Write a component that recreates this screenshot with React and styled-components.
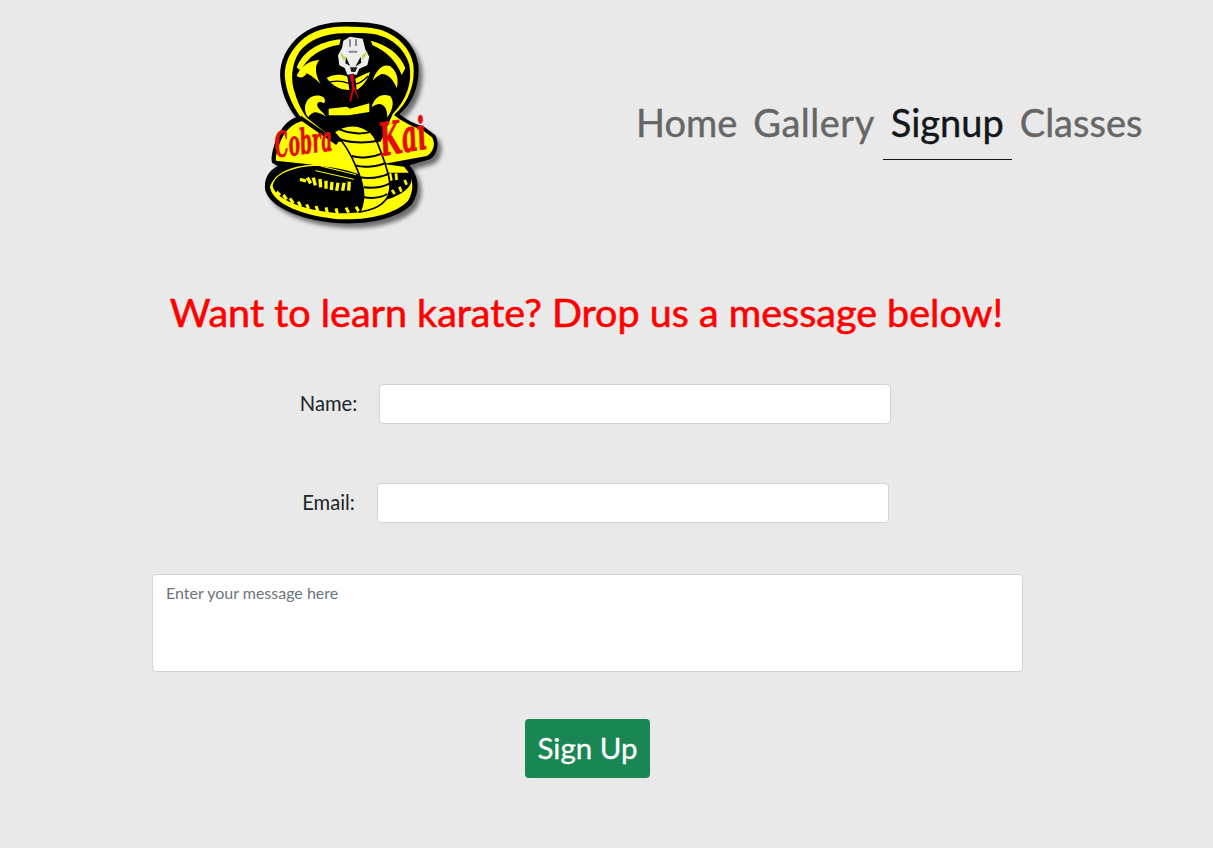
import React from "react";
import styled, { createGlobalStyle } from "styled-components";

const GlobalStyle = createGlobalStyle`
  * {
    box-sizing: border-box;
  }
  body {
    margin: 0;
    background: #e9e9e9;
    font-family: Lato, "Liberation Sans", sans-serif;
    color: #212529;
  }
`;

const Page = styled.div`
  width: 1213px;
  height: 848px;
  overflow: hidden;
`;

const Header = styled.header`
  display: flex;
  align-items: flex-start;
  height: 240px;
  padding: 10px 0 0 250px;
`;

const Nav = styled.nav`
  display: flex;
  margin: 72px 0 0 178px;
`;

const NavLink = styled.a`
  display: block;
  padding: 15px 8px 13px;
  height: 78px;
  font-size: 38px;
  line-height: 50px;
  letter-spacing: ${(props) => props.spacing || "0"};
  -webkit-text-stroke: 0.4px currentColor;
  color: ${(props) => (props.active ? "#14171a" : "#666666")};
  border-bottom: ${(props) => (props.active ? "1px solid #14171a" : "1px solid transparent")};
`;

const Main = styled.main`
  width: 1175px;
  display: flex;
  flex-direction: column;
  align-items: center;
`;

const Title = styled.h1`
  margin: 43px 2px 0 0;
  font-size: 39.5px;
  line-height: 58px;
  font-weight: 400;
  -webkit-text-stroke: 0.6px currentColor;
  color: #ff0000;
`;

const Form = styled.form`
  display: flex;
  flex-direction: column;
  align-items: center;
  margin-top: 43px;
`;

const Row = styled.div`
  display: flex;
  align-items: center;
  gap: 22px;
  margin-bottom: 59px;
  padding-left: 16px;
`;

const Label = styled.label`
  font-size: 20.2px;
  line-height: 26px;
  margin-top: -2px;
`;

const Input = styled.input`
  width: 512px;
  height: 40px;
  background: #fff;
  border: 1px solid #ced4da;
  border-radius: 4px;
`;

const Message = styled.textarea`
  display: block;
  width: 871px;
  height: 98px;
  margin-top: -8px;
  padding: 6px 13px;
  background: #fff;
  border: 1px solid #ced4da;
  border-radius: 4px;
  font-family: Lato, "Liberation Sans", sans-serif;
  font-size: 16px;
  line-height: 24px;
  resize: none;
  &::placeholder {
    color: #6c757d;
    opacity: 1;
  }
`;

const SubmitButton = styled.button`
  width: 125px;
  height: 59px;
  margin-top: 47px;
  padding: 0 0 3px;
  background: #198754;
  border: none;
  border-radius: 4px;
  color: #fff;
  font-family: Lato, "Liberation Sans", sans-serif;
  font-size: 29.5px;
  -webkit-text-stroke: 0.3px currentColor;
`;

const LogoSvg = styled.svg`
  display: block;
  flex: none;
  width: 200px;
  height: 230px;
`;

const LogoWordText = styled.text`
  font-family: "DejaVu Serif", "Liberation Serif", serif;
  font-style: italic;
  font-weight: 700;
  fill: #e30c0c;
  stroke: #e30c0c;
  stroke-width: 2px;
`;

const OUTLINE =
  "M300 36 C240 34 180 45 140 85 C100 125 85 170 92 215 C98 260 118 295 138 322 C110 332 88 360 76 395 C68 420 62 440 66 458 L84 468 C54 482 40 510 46 542 C62 592 150 628 250 638 C340 647 445 628 486 582 C512 545 506 495 478 466 L540 448 C560 438 570 400 556 376 L522 350 C495 343 470 330 448 312 C490 280 510 220 505 165 C498 110 460 70 410 50 C375 38 335 36 300 36 Z";

const HOOD =
  "M298 70 C235 66 180 85 148 125 C122 165 122 215 135 250 C145 285 160 310 172 325 L262 395 L392 395 L428 312 C470 270 488 215 478 165 C465 115 420 80 370 72 C345 68 320 68 298 70 Z";

const Logo = () => (
  <LogoSvg viewBox="0 0 600 690">
    <defs>
      <filter id="logoShadow" x="-10%" y="-10%" width="120%" height="120%">
        <feGaussianBlur stdDeviation="7" />
      </filter>
    </defs>
    <path d={OUTLINE} fill="#6e6e6e" transform="translate(12 14)" filter="url(#logoShadow)" />
    <path d={OUTLINE} fill="#000" />
    {/* yellow rim and wings */}
    <path
      d="M300 50 C245 48 188 58 150 95 C112 132 100 172 106 213 C112 258 135 300 160 332 C125 340 102 365 90 398 C82 420 76 438 78 452 L190 464 C125 466 70 490 60 532 C70 584 160 616 250 626 C340 633 434 616 474 572 C494 540 492 500 462 470 L400 462 L530 438 C550 428 558 402 546 382 L514 358 C490 351 462 338 432 315 C478 275 496 220 490 165 C482 115 445 80 400 62 C370 52 335 50 300 50 Z"
      fill="#ffff00"
    />
    {/* hood */}
    <path d={HOOD} fill="#000" />
    {/* diagonal edge between hood and the left wing */}
    <path d="M150 322 L262 400" stroke="#000" strokeWidth="12" fill="none" />
    {/* hood arcs */}
    <path d="M140 172 C160 125 205 95 272 88 L268 104 C215 112 172 140 152 182 Z" fill="#ffff00" />
    <path d="M466 175 C450 130 410 105 362 92 L368 106 C405 122 438 150 455 195 Z" fill="#ffff00" />
    {/* hood markings */}
    <path d="M140 198 C150 172 175 152 208 150 C192 168 196 195 212 222 C195 205 180 195 170 190 C160 205 150 205 140 198 Z" fill="#ffff00" />
    <path d="M368 212 C378 180 398 160 420 168 C440 182 448 210 440 235 C430 205 410 190 395 192 C385 195 375 205 368 212 Z" fill="#ffff00" />
    <path d="M165 295 C165 270 185 252 212 258 C225 262 228 272 222 280 C208 272 200 278 202 288 C205 298 218 305 228 320 C210 308 190 296 175 322 C168 315 165 305 165 295 Z" fill="#ffff00" />
    <path d="M365 292 C372 262 395 248 420 258 C432 270 432 295 412 322 C412 300 405 285 390 282 C380 282 372 286 365 292 Z" fill="#ffff00" />
    <path d="M236 296 L290 290 L300 296 L358 280 L358 306 L296 316 L236 316 Z" fill="#ffff00" />
    {/* neck bands under the head */}
    <path d="M230 204 C250 192 275 192 292 200 L298 240 C270 240 245 226 230 204 Z" fill="#ffff00" />
    <path d="M232 218 C250 212 275 212 296 220" stroke="#000" strokeWidth="4" fill="none" />
    <path d="M360 186 C345 192 328 200 316 206 L320 240 C342 226 354 206 360 186 Z" fill="#ffff00" />
    <path d="M318 222 C332 218 345 208 354 198" stroke="#000" strokeWidth="4" fill="none" />
    {/* head */}
    <path
      d="M280 92 L300 80 L338 86 L346 118 L358 140 L352 166 L328 176 L320 194 L292 194 L284 174 L268 166 L264 136 L276 114 Z"
      fill="#ededed"
    />
    <path d="M300 88 L300 110 M318 88 L318 108 M296 125 L322 125" stroke="#8a8a8a" strokeWidth="6" fill="none" />
    <path d="M288 140 L300 168 L286 160 Z M332 140 L316 170 L334 158 Z" fill="#111" />
    <path d="M300 172 L322 172 L316 186 L304 186 Z" fill="#222" />
    <path d="M268 126 L286 142 L282 154 Z M354 124 L336 136 L338 150 Z" fill="#c9c93a" />
    {/* tongue */}
    <path
      d="M298 194 L312 192 L312 222 L328 270 L321 262 L312 240 L304 276 L298 272 L306 232 Z"
      fill="#e3000f"
      stroke="#000"
      strokeWidth="1.5"
    />
    {/* coil */}
    <path d="M190 468 C125 472 72 494 68 528 C76 568 160 600 250 608 C290 612 330 608 350 602 L350 500 C300 482 240 466 190 468 Z" fill="#000" />
    <path d="M400 488 L482 488 C494 520 474 550 400 572 Z" fill="#000" />
    <path d="M212 468 L318 494 M196 482 L312 508" stroke="#ffff00" strokeWidth="3" />
    <path
      d="M150 508 L168 513 M172 503 L182 520 M190 503 L196 526 M210 507 L212 532 M228 512 L228 536 M246 516 L244 540 M264 518 L260 542 M282 518 L278 542 M298 515 L296 542"
      stroke="#ffff00"
      strokeWidth="10"
    />
    <path
      d="M80 545 L90 556 M100 555 L110 568 M120 565 L130 580 M145 575 L152 590 M170 583 L176 597 M198 588 L204 604 M228 592 L232 608 M258 595 L262 610 M288 593 L296 608 M318 590 L326 604"
      stroke="#ffff00"
      strokeWidth="9"
    />
    <path
      d="M420 490 L424 512 M438 490 L440 510 M464 510 L470 524 M448 530 L454 545 M426 540 L434 552"
      stroke="#ffff00"
      strokeWidth="8"
    />
    {/* snake body over the coil */}
    <path
      d="M252 366 C300 332 360 345 382 398 C398 440 420 490 420 530 C420 570 390 596 330 606 C350 560 340 520 318 470 C302 430 285 400 252 366 Z"
      fill="#ffff00"
      stroke="#000"
      strokeWidth="5"
    />
    <path
      d="M268 358 C300 372 340 374 366 364 M262 384 C295 400 345 400 385 392 M305 438 C330 446 370 442 398 430 M316 466 C340 474 385 470 408 458 M328 502 C360 506 395 502 418 490 M342 532 C370 536 400 530 420 520 M342 562 C370 566 395 562 412 552"
      stroke="#000"
      strokeWidth="6"
      fill="none"
    />
    {/* wordmark */}
    <LogoWord x="78" y="442" rotate="-7" size="104" squeeze="0.5">Cobra</LogoWord>
    <LogoWord x="396" y="438" rotate="-9" size="136" squeeze="0.55">Kai</LogoWord>
  </LogoSvg>
);

const LogoWord = ({ x, y, rotate, size, squeeze, children }) => (
  <LogoWordText
    fontSize={size}
    transform={`translate(${x} ${y}) rotate(${rotate}) scale(${squeeze} 1)`}
  >
    {children}
  </LogoWordText>
);

const App = () => (
  <Page>
    <GlobalStyle />
    <Header>
      <Logo />
      <Nav>
        <NavLink>Home</NavLink>
        <NavLink spacing="0.5px">Gallery</NavLink>
        <NavLink active>Signup</NavLink>
        <NavLink>Classes</NavLink>
      </Nav>
    </Header>
    <Main>
      <Title>Want to learn karate? Drop us a message below!</Title>
      <Form>
        <Row>
          <Label>Name:</Label>
          <Input type="text" />
        </Row>
        <Row>
          <Label>Email:</Label>
          <Input type="email" />
        </Row>
        <Message placeholder="Enter your message here" />
        <SubmitButton type="button">Sign Up</SubmitButton>
      </Form>
    </Main>
  </Page>
);

export default App;
